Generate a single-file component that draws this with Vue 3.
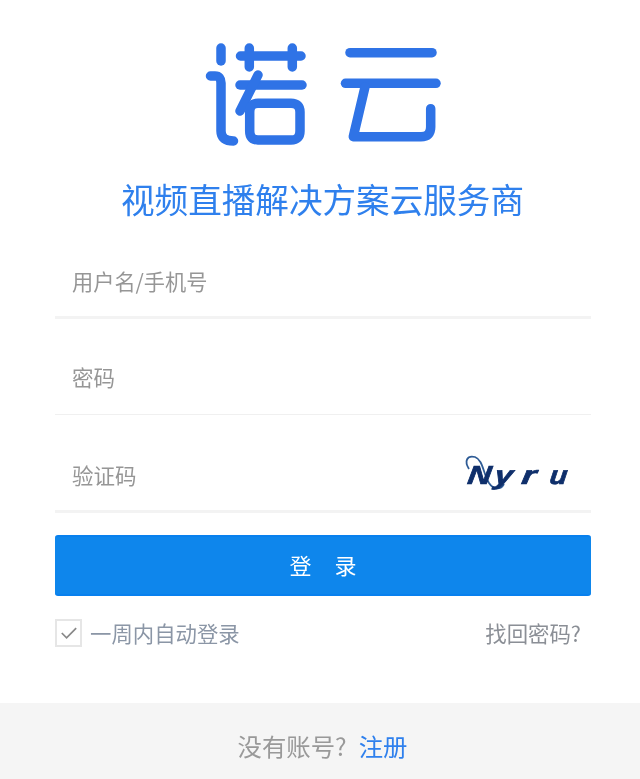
<script setup>
const fields = [
  { id: 'user', label: '用户名/手机号' },
  { id: 'pass', label: '密码' },
]
</script>

<template>
  <div class="page">
    <header class="brand">
      <svg class="logo" viewBox="200 40 244 108" width="244" height="108" fill="none" stroke="#2f73e6" stroke-width="9.5" stroke-linecap="round" stroke-linejoin="round" aria-label="诺云">
        <path d="M221 48V61" />
        <path d="M210.500 76H215Q221 76 221 83V131Q221 141 233.500 141" />
        <path d="M240.500 56H301M249.300 48V67M292.300 48V67" />
        <path d="M240 85H302" />
        <path d="M258 75L240 111" />
        <path d="M249.700 112Q249.700 103.300 258 103.300H291Q300 103.300 300 112V131Q300 140 291 140H258Q249.700 140 249.700 131Z" />
        <path d="M350 52.700H432" />
        <path d="M345.500 83.300H436" />
        <path d="M365 87L353.300 136.700H421Q430.700 136.700 430.700 127V108.700" />
      </svg>
      <h1 class="slogan">视频直播解决方案云服务商</h1>
    </header>

    <form class="form" @submit.prevent>
      <div v-for="f in fields" :key="f.id" class="field" :class="f.id">
        <span class="ph">{{ f.label }}</span>
      </div>
      <div class="field code">
        <span class="ph">验证码</span>
        <span class="captcha">
          <svg class="swirl" viewBox="0 0 44 44" width="44" height="44" fill="none" stroke="#2f5c96" stroke-width="1.8">
            <path d="M6 18C1 10 4 4 12 6C20 9 20 22 26 32C30 38 37 40 41 33" />
          </svg>
          <i class="c c1">N</i><i class="c c2">y</i><i class="c c3">r</i><i class="c c4">u</i>
        </span>
      </div>
      <button class="submit" type="button"><span>登</span><span>录</span></button>
      <div class="opts">
        <label class="remember">
          <span class="box">
            <svg viewBox="0 0 24 24" width="24" height="24" fill="none" stroke="#888" stroke-width="1.8">
              <path d="M5 12L10 17L20 7" />
            </svg>
          </span>
          <span>一周内自动登录</span>
        </label>
        <a class="forgot">找回密码?</a>
      </div>
    </form>

    <footer class="foot">
      <span>没有账号?</span>
      <a class="reg">注册</a>
    </footer>
  </div>
</template>

<style scoped>
.page {
  width: 640px;
  height: 779px;
  display: flex;
  flex-direction: column;
  background: #fff;
  font-family: "Noto Sans CJK SC", "Liberation Sans", sans-serif;
  overflow: hidden;
}
.brand {
  display: flex;
  flex-direction: column;
  align-items: center;
  padding-top: 40px;
}
.logo {
  display: block;
  margin-left: 4px;
  filter: blur(0.5px);
}
.slogan {
  margin: 26px 0 0 5px;
  font-size: 33.6px;
  line-height: 50px;
  font-weight: 400;
  color: #2f80ed;
  white-space: nowrap;
  filter: blur(0.5px);
}
.form {
  margin: 0 49px 0 55px;
  display: flex;
  flex-direction: column;
}
.field {
  box-sizing: border-box;
  display: flex;
  align-items: center;
  justify-content: space-between;
  padding-left: 17px;
}
.field.user {
  margin-top: 27px;
  height: 68px;
  padding-bottom: 6px;
  border-bottom: 3px solid #f3f3f3;
}
.field.pass {
  height: 96px;
  padding-top: 20px;
  border-bottom: 1px solid #f0f0f0;
}
.field.code {
  height: 98px;
  padding-top: 24px;
  border-bottom: 3px solid #f3f3f3;
}
.ph {
  font-size: 21.5px;
  color: #969696;
  filter: blur(0.6px);
}
.field.user .ph { font-size: 21.2px; }
.captcha {
  position: relative;
  width: 120px;
  height: 40px;
  display: flex;
  align-items: center;
  margin-right: 14px;
  color: #0f2f6b;
  font-family: "Liberation Sans", sans-serif;
  font-weight: 700;
  font-size: 26px;
  line-height: 40px;
  -webkit-text-stroke: 0.7px #0f2f6b;
  filter: blur(0.7px);
}
.swirl { position: absolute; left: 6px; top: -4px; }
.c { font-style: italic; display: block; transform-origin: left center; }
.c1 { margin-left: 11px; width: 24px; transform: scaleX(1.25) skewX(-6deg); }
.c2 { margin-left: 3px; width: 20px; transform: scaleX(1.25) skewX(-6deg); }
.c3 { margin-left: 7px; width: 15px; transform: scaleX(1.4) skewX(-6deg); }
.c4 { margin-left: 13px; transform: scaleX(1.1) skewX(-6deg); }
.submit {
  margin-top: 22px;
  height: 61px;
  border: 0;
  border-top: 2px solid #0880ee;
  border-bottom: 2px solid #0880ee;
  border-radius: 3px;
  background: #0e86ec;
  color: #fff;
  font-family: inherit;
  font-size: 22px;
  padding: 0 0 3px;
  display: flex;
  align-items: center;
  justify-content: center;
  gap: 23px;
  filter: blur(0.4px);
}
.submit span { filter: blur(0.3px); }
.opts {
  margin-top: 21px;
  display: flex;
  align-items: center;
  justify-content: space-between;
  font-size: 21.4px;
  color: #8b96a6;
  padding-right: 10px;
}
.remember {
  display: flex;
  align-items: center;
  gap: 8px;
  filter: blur(0.5px);
}
.box {
  width: 27px;
  height: 28px;
  box-sizing: border-box;
  border: 2px solid #e6e6e6;
  display: flex;
  align-items: center;
  justify-content: center;
}
.forgot { color: #8b8f96; filter: blur(0.5px); }
.foot {
  margin-top: auto;
  height: 76px;
  background: #f5f5f5;
  display: flex;
  align-items: center;
  justify-content: center;
  gap: 12px;
  font-size: 24.4px;
  color: #999;
  padding: 8px 0 0 5px;
  box-sizing: border-box;
}
.foot span, .reg { filter: blur(0.5px); }
.reg { color: #2f80ed; }
</style>
